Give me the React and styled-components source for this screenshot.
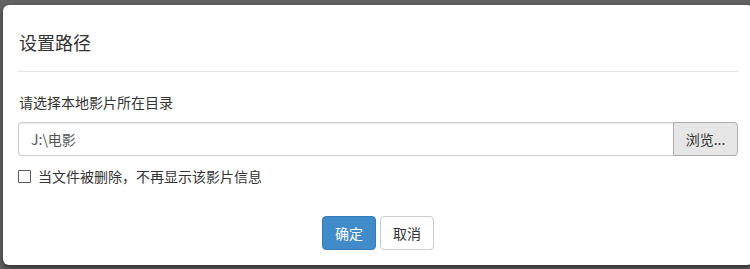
import React from "react";
import styled, { createGlobalStyle } from "styled-components";

const Global = createGlobalStyle`
  html, body { margin: 0; padding: 0; }
  body {
    background: #636363;
    overflow: hidden;
    font-family: "Noto Sans CJK SC", "Liberation Sans", sans-serif;
    color: #333;
  }
`;

const Backdrop = styled.div`
  width: 750px;
  height: 269px;
  padding: 5px 0 0 3px;
  box-sizing: border-box;
  overflow: hidden;
`;

const Modal = styled.div`
  width: 750px;
  height: 260px;
  box-sizing: border-box;
  background: #fff;
  border-radius: 6px;
  box-shadow: 0 3px 6px rgba(0, 0, 0, 0.55);
  padding: 0 15px;
  display: flex;
  flex-direction: column;
`;

const Title = styled.h4`
  margin: 27px 0 0 1px;
  font-size: 18px;
  line-height: 20px;
  font-weight: 400;
  color: #333;
`;

const Divider = styled.div`
  margin-top: 19px;
  height: 1px;
  background: #e5e5e5;
`;

const Label = styled.div`
  margin: 20px 0 0 1px;
  font-size: 14px;
  line-height: 20px;
`;

const InputGroup = styled.div`
  margin-top: 10px;
  display: flex;
  height: 34px;
`;

const PathInput = styled.input`
  flex: 1;
  min-width: 0;
  box-sizing: border-box;
  height: 34px;
  border: 1px solid #ccc;
  border-right: none;
  border-radius: 4px 0 0 4px;
  padding: 0 12px;
  font: inherit;
  font-size: 14px;
  color: #555;
  outline: none;
  box-shadow: inset 0 1px 1px rgba(0, 0, 0, 0.075);
`;

const BrowseButton = styled.button`
  width: 65px;
  box-sizing: border-box;
  height: 34px;
  background: #e6e6e6;
  border: 1px solid #adadad;
  border-radius: 0 4px 4px 0;
  font: inherit;
  font-size: 14px;
  color: #333;
  padding: 0;
`;

const CheckRow = styled.label`
  margin-top: 10px;
  display: flex;
  align-items: center;
  gap: 7px;
  font-size: 14px;
  line-height: 20px;
`;

const Check = styled.input`
  appearance: none;
  margin: 0;
  width: 13px;
  height: 13px;
  box-sizing: border-box;
  border: 1px solid #5a5a5a;
  border-radius: 1px;
  background: #fff;
`;

const Footer = styled.div`
  margin-top: 30px;
  display: flex;
  justify-content: center;
  gap: 4px;
`;

const Button = styled.button`
  height: 34px;
  box-sizing: border-box;
  padding: 0 12px;
  font: inherit;
  font-size: 14px;
  border-radius: 4px;
  border: 1px solid ${(p) => (p.$primary ? "#357ebd" : "#ccc")};
  background: ${(p) => (p.$primary ? "#428bca" : "#fff")};
  color: ${(p) => (p.$primary ? "#fff" : "#333")};
`;

export default function App() {
  return (
    <>
      <Global />
      <Backdrop>
        <Modal>
          <Title>设置路径</Title>
          <Divider />
          <Label>请选择本地影片所在目录</Label>
          <InputGroup>
            <PathInput defaultValue="J:\电影" />
            <BrowseButton>浏览...</BrowseButton>
          </InputGroup>
          <CheckRow>
            <Check type="checkbox" />
            当文件被删除，不再显示该影片信息
          </CheckRow>
          <Footer>
            <Button $primary>确定</Button>
            <Button>取消</Button>
          </Footer>
        </Modal>
      </Backdrop>
    </>
  );
}
